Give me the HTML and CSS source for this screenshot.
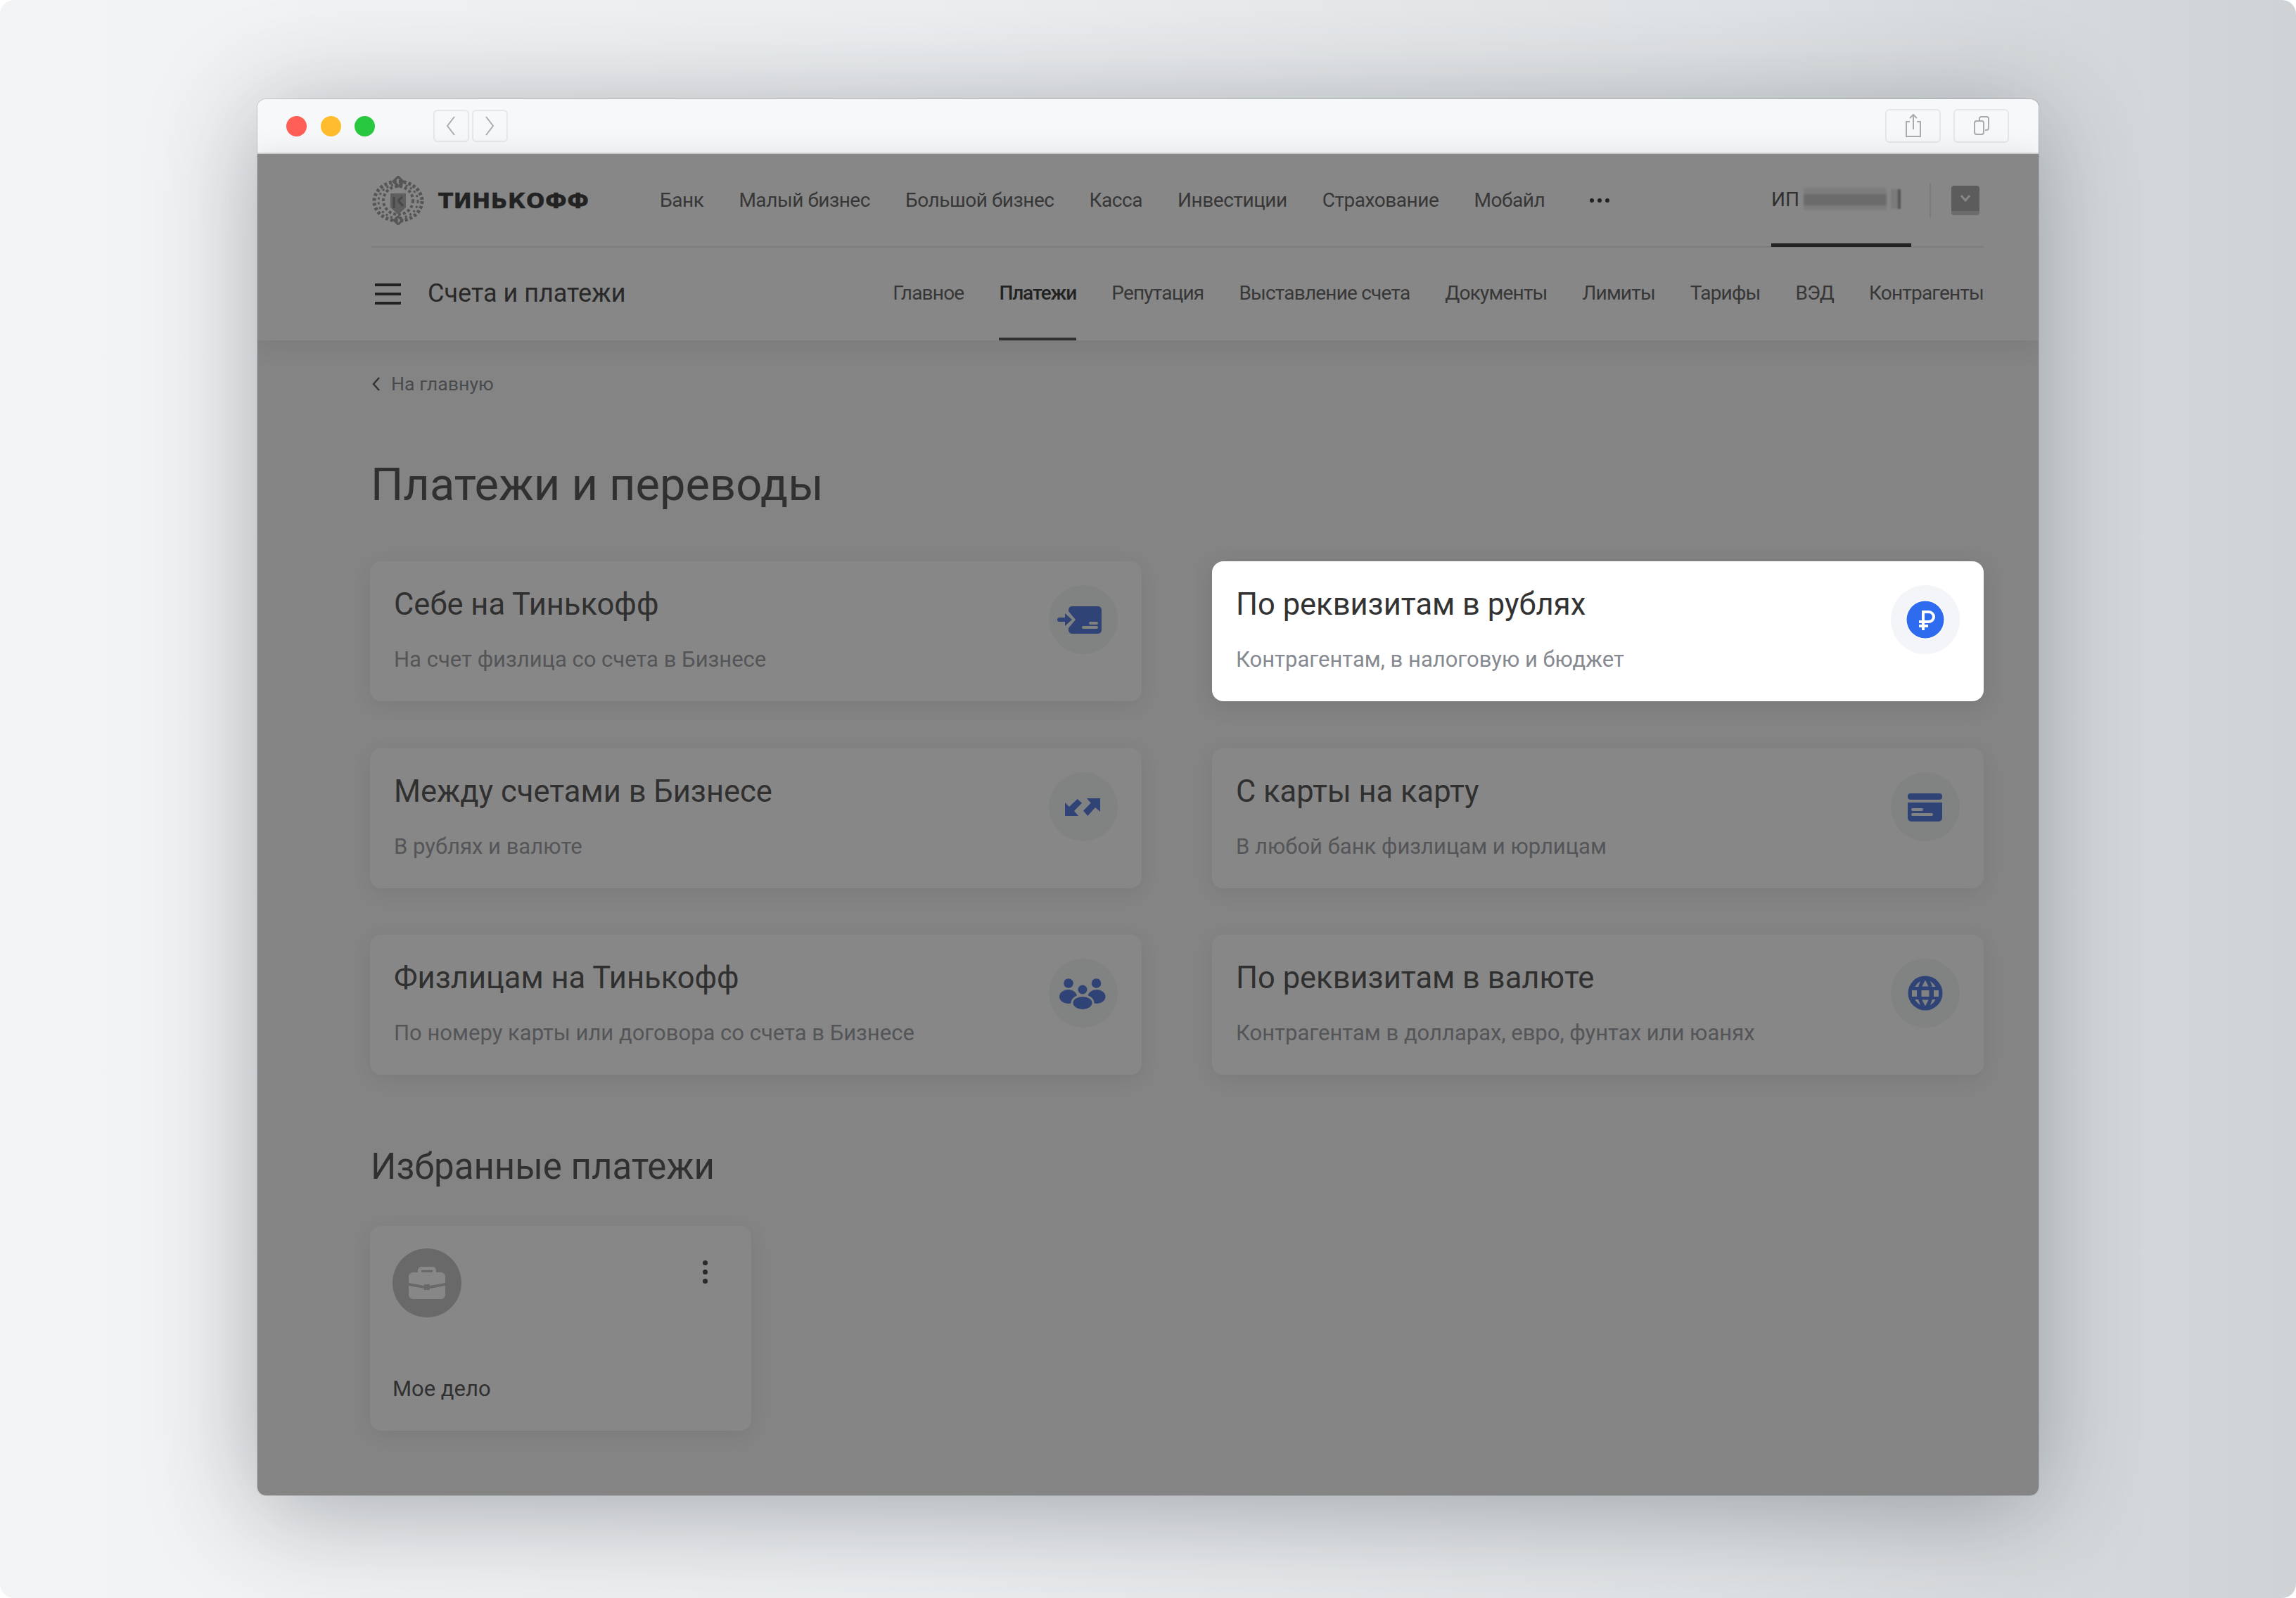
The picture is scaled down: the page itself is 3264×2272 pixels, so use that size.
FILE: index.html
```html
<!DOCTYPE html>
<html lang="ru">
  <head>
    <meta charset="utf-8" />
    <title>Платежи и переводы</title>
    <link rel="stylesheet" href="styles.css">
  </head>
  <body>
    <div class="stage">
      <div class="window">
        <div class="titlebar">
          <span class="light red"></span>
          <span class="light yellow"></span>
          <span class="light green"></span>
          <div class="arrows">
            <span class="tool-btn small">
              <svg width="20" height="30" viewBox="0 0 20 30"><path d="M15 2 5 15l10 13" class="thin"/></svg>
            </span>
            <span class="tool-btn small">
              <svg width="20" height="30" viewBox="0 0 20 30"><path d="M5 2l10 13L5 28" class="thin"/></svg>
            </span>
          </div>
          <div class="tools">
            <span class="tool-btn">
              <svg width="28" height="34" viewBox="0 0 28 34"><path d="M14 1v21M9 6l5-5 5 5M9 11H4v21h20V11h-5" class="thin"/></svg>
            </span>
            <span class="tool-btn">
              <svg width="28" height="34" viewBox="0 0 28 34"><path d="M11 9V7a3 3 0 0 1 3-3h7a3 3 0 0 1 3 3v13a3 3 0 0 1-3 3h-2M7 10h7a3 3 0 0 1 3 3v13a3 3 0 0 1-3 3H7a3 3 0 0 1-3-3V13a3 3 0 0 1 3-3z" class="thin"/></svg>
            </span>
          </div>
        </div>

        <div class="content">
          <header class="header">
            <div class="topbar">
              <div class="logo">
                <svg class="crest" width="76" height="70" viewBox="0 0 76 70">
                  <g fill="none" stroke="#8a8a8a">
                    <ellipse cx="38" cy="36" rx="34" ry="28" stroke-width="5" stroke-dasharray="4 3"/>
                    <ellipse cx="38" cy="36" rx="28" ry="24" stroke-width="3" stroke-dasharray="3 4"/>
                    <ellipse cx="38" cy="35" rx="21" ry="20" stroke-width="4" stroke-dasharray="4 3"/>
                    <path d="M38 1l7 7-7 7-7-7zM38 69l6-6-6-5-6 5z" stroke-width="3"/>
                  </g>
                  <path d="M27 25h22v20l-11 10-11-10z" fill="#a0a0a0"/>
                  <path d="M32 30v16M38 35l7 8M38 35l6-5" stroke="#6a6a6a" stroke-width="3" fill="none"/>
                </svg>
                <span class="wordmark">ТИНЬКОФФ</span>
              </div>
              <nav class="topnav">
                <a>Банк</a>
                <a>Малый бизнес</a>
                <a>Большой бизнес</a>
                <a>Касса</a>
                <a>Инвестиции</a>
                <a>Страхование</a>
                <a>Мобайл</a>
                <span class="more"><i></i><i></i><i></i></span>
              </nav>
              <div class="account">
                <div class="org">
                  <span class="org-name">ИП</span>
                  <span class="blur-name"></span>
                  <span class="blur-tail"></span>
                </div>
                <span class="account-sep"></span>
                <span class="account-btn">
                  <svg width="20" height="14" viewBox="0 0 20 14"><path d="M4 3l6 7 6-7" fill="none" stroke="#fff" stroke-width="3"/></svg>
                </span>
              </div>
            </div>
            <div class="subbar">
              <span class="burger"><i></i><i></i><i></i></span>
              <span class="section-name">Счета и платежи</span>
              <nav class="subnav">
                <a>Главное</a>
                <a class="active">Платежи</a>
                <a>Репутация</a>
                <a>Выставление счета</a>
                <a>Документы</a>
                <a>Лимиты</a>
                <a>Тарифы</a>
                <a>ВЭД</a>
                <a>Контрагенты</a>
              </nav>
            </div>
          </header>

          <main class="main">
            <a class="back">
              <svg width="14" height="22" viewBox="0 0 14 22"><path d="M11 2 3 11l8 9" fill="none" stroke="#3a3a3a" stroke-width="2.5"/></svg>
              На главную
            </a>
            <h1 class="page-title">Платежи и переводы</h1>

            <div class="cards">
              <div class="card">
                <div class="card-text">
                  <div class="card-title">Себе на Тинькофф</div>
                  <div class="card-sub">На счет физлица со счета в Бизнесе</div>
                </div>
                <svg class="card-icon" viewBox="0 0 98 98">
                  <circle cx="49" cy="49" r="49" class="disc"/>
                  <path d="M33 30h37a5 5 0 0 1 5 5v29a5 5 0 0 1-5 5H33a5 5 0 0 1-5-5v-3l10-12-10-12v-2a5 5 0 0 1 5-5z" class="blue"/>
                  <path d="M23 40l10 9-10 9v-6h-8a3 3 0 0 1 0-6h8z" class="blue"/>
                  <path d="M59 54h9M49 60h19" class="gap"/>
                </svg>
              </div>

              <div class="card selected">
                <div class="card-text">
                  <div class="card-title">По реквизитам в рублях</div>
                  <div class="card-sub">Контрагентам, в налоговую и бюджет</div>
                </div>
                <svg class="card-icon" viewBox="0 0 98 98">
                  <circle cx="49" cy="49" r="49" class="disc"/>
                  <circle cx="49" cy="49" r="28" fill="#fff"/>
                  <circle cx="49" cy="49" r="26.5" fill="#2f6bef"/>
                  <path d="M46 64V38h8a7 7 0 0 1 0 14H40M40 58h13" fill="none" stroke="#fff" stroke-width="4"/>
                </svg>
              </div>

              <div class="card">
                <div class="card-text">
                  <div class="card-title">Между счетами в Бизнесе</div>
                  <div class="card-sub">В рублях и валюте</div>
                </div>
                <svg class="card-icon" viewBox="0 0 98 98">
                  <circle cx="49" cy="49" r="49" class="disc"/>
                  <path d="M23 62V43l6 6 11.7-11L47 43.7 36 55l6 7z" class="blue"/>
                  <path d="M73 37H54l5.7 6.7L49 54.7l6.3 7.3L66 50l7 6z" class="blue"/>
                </svg>
              </div>

              <div class="card">
                <div class="card-text">
                  <div class="card-title">С карты на карту</div>
                  <div class="card-sub">В любой банк физлицам и юрлицам</div>
                </div>
                <svg class="card-icon" viewBox="0 0 98 98">
                  <circle cx="49" cy="49" r="49" class="disc"/>
                  <rect x="24" y="30" width="49" height="9" rx="4" class="blue"/>
                  <path d="M24 43h49v22a5 5 0 0 1-5 5H29a5 5 0 0 1-5-5z" class="blue"/>
                  <path d="M31 53h13M31 60h27" class="gap"/>
                </svg>
              </div>

              <div class="card">
                <div class="card-text">
                  <div class="card-title">Физлицам на Тинькофф</div>
                  <div class="card-sub">По номеру карты или договора со счета в Бизнесе</div>
                </div>
                <svg class="card-icon" viewBox="0 0 98 98">
                  <circle cx="49" cy="49" r="49" class="disc"/>
                  <circle cx="28" cy="35" r="6.8" class="blue"/>
                  <circle cx="67.5" cy="35" r="6.8" class="blue"/>
                  <circle cx="48" cy="44" r="6.5" class="blue"/>
                  <ellipse cx="27.5" cy="54" rx="12.5" ry="10" class="blue"/>
                  <ellipse cx="68" cy="54" rx="12.5" ry="10" class="blue"/>
                  <ellipse cx="48" cy="63" rx="15" ry="10.5" class="blue ringed"/>
                </svg>
              </div>

              <div class="card">
                <div class="card-text">
                  <div class="card-title">По реквизитам в валюте</div>
                  <div class="card-sub">Контрагентам в долларах, евро, фунтах или юанях</div>
                </div>
                <svg class="card-icon" viewBox="0 0 98 98">
                  <circle cx="49" cy="49" r="49" class="disc"/>
                  <circle cx="49" cy="49" r="24.5" class="blue"/>
                  <path d="M30 45h7v9h-7zM43.500 45h11v9h-11zM61 45h7v9h-7zM49 30.500l4.700 9h-9.400zM49 67.500l4.700-9h-9.400zM34.500 40c1.500-3 4-6 7.500-8l-3 8zM63.500 40c-1.500-3-4-6-7.500-8l3 8zM34.500 58c1.500 3 4 6 7.500 8l-3-8zM63.500 58c-1.500 3-4 6-7.500 8l3-8z" class="hole"/>
                </svg>
              </div>
            </div>

            <h2 class="fav-title">Избранные платежи</h2>
            <div class="fav-card">
              <div class="fav-top">
                <svg class="fav-icon" viewBox="0 0 98 98">
                  <circle cx="49" cy="49" r="49" fill="#b8b8b8"/>
                  <path d="M36 34v-3a5 5 0 0 1 5-5h16a5 5 0 0 1 5 5v3h7a6 6 0 0 1 6 6v9l-22 4v-2h-8v2l-22-4v-9a6 6 0 0 1 6-6zM41 34h16v-3H41z" fill="#fff" fill-rule="evenodd"/>
                  <path d="M23 53l22 4v2h8v-2l22-4v13a6 6 0 0 1-6 6H29a6 6 0 0 1-6-6z" fill="#fff"/>
                </svg>
                <span class="kebab"><i></i><i></i><i></i></span>
              </div>
              <div class="fav-name">Мое дело</div>
            </div>
          </main>

          <div class="dim"></div>
        </div>
      </div>
    </div>
  </body>
</html>
```

FILE: styles.css
```css
* {
  box-sizing: border-box;
}

body {
  margin: 0;
  background: #fff;
  font-family: Roboto, "Liberation Sans", sans-serif;
  color: #333;
}

.stage {
  width: 3264px;
  height: 2272px;
  padding: 141px 0 0 366px;
  border-radius: 20px;
  overflow: hidden;
  background: linear-gradient(90deg, #f3f4f5 0%, #eceef0 40%, #e0e3e5 75%, #cfd3d6 100%);
}

.window {
  width: 2532px;
  height: 1985px;
  border-radius: 12px;
  overflow: hidden;
  box-shadow: 0 0 0 1px rgba(0, 0, 0, 0.12), 0 20px 150px rgba(40, 50, 60, 0.38);
}

/* title bar */
.titlebar {
  height: 78px;
  display: flex;
  align-items: center;
  padding: 0 42px 0 41px;
  background: #f7f8f9;
  border-bottom: 2px solid #d4d5d6;
}

.light {
  width: 29px;
  height: 29px;
  border-radius: 50%;
  margin-right: 19.5px;
}

.red { background: #ff5f57; }
.yellow { background: #ffbd2e; }
.green { background: #28c940; }

.arrows {
  display: flex;
  gap: 4px;
  margin-left: 63px;
}

.tools {
  display: flex;
  gap: 18px;
  margin-left: auto;
}

.tool-btn {
  width: 79px;
  height: 48px;
  display: flex;
  align-items: center;
  justify-content: center;
  border: 2px solid #e6e7e9;
  border-radius: 6px;
}

.tool-btn.small {
  width: 51px;
  height: 46px;
}

.thin {
  fill: none;
  stroke: #a9abad;
  stroke-width: 2;
}

/* page */
.content {
  position: relative;
  height: 1907px;
  background: #f8f8f9;
}

.dim {
  position: absolute;
  inset: 0;
  z-index: 5;
  background: rgba(47, 47, 47, 0.577);
}

.header {
  background: #fff;
  height: 265px;
  padding: 0 78px 0 162px;
  box-shadow: 0 4px 40px rgba(0, 0, 0, 0.12);
  position: relative;
}

.topbar {
  height: 133px;
  display: flex;
  align-items: center;
  border-bottom: 2px solid #e4e5e7;
}

.logo {
  display: flex;
  align-items: center;
  gap: 19px;
  width: 410px;
}

.wordmark {
  font-family: "DejaVu Sans", sans-serif;
  font-weight: 700;
  font-size: 31px;
  letter-spacing: 0.6px;
  color: #111;
  -webkit-text-stroke: 0.5px #111;
}

.topnav,
.subnav {
  display: flex;
  gap: 50px;
  font-size: 28px;
  color: #444;
  white-space: nowrap;
}

.topnav {
  align-items: center;
  letter-spacing: -0.45px;
}

.subnav {
  letter-spacing: -0.8px;
}

.more {
  display: flex;
  gap: 5px;
  margin-left: 14px;
}

.more i {
  width: 6px;
  height: 6px;
  border-radius: 50%;
  background: #111;
}

.account {
  display: flex;
  align-items: center;
  margin-left: auto;
  height: 100%;
}

.org {
  width: 199px;
  height: 100%;
  display: flex;
  align-items: center;
  gap: 6px;
  border-bottom: 5px solid #111;
  margin-bottom: -2px;
  font-size: 28px;
}

.blur-name {
  width: 118px;
  height: 32px;
  background: linear-gradient(180deg, #e6e6e6 0 28%, #bdbdbd 28% 78%, #e8e8e8 78% 100%);
  filter: blur(1.5px);
}

.blur-tail {
  width: 14px;
  height: 28px;
  background: #e2e2e2;
  border-right: 4px solid #8a8a8a;
  filter: blur(1px);
}

.account-sep {
  width: 2px;
  height: 50px;
  margin: 0 29px 0 26px;
  background: #e4e5e7;
}

.account-btn {
  width: 40px;
  height: 42px;
  display: flex;
  align-items: center;
  justify-content: center;
  border-radius: 4px;
  background: #9a9a9a;
  border-bottom: 6px solid #c0c0c0;
  margin-right: 6px;
}

.subbar {
  height: 132px;
  display: flex;
  align-items: center;
}

.burger {
  display: flex;
  flex-direction: column;
  gap: 9px;
  margin-left: 5px;
}

.burger i {
  display: block;
  width: 37px;
  height: 4px;
  background: #111;
}

.section-name {
  margin: 0 0 2px 38px;
  font-size: 36px;
  color: #222;
}

.subnav {
  margin-left: auto;
  height: 100%;
  align-items: stretch;
}

.subnav a {
  display: flex;
  align-items: center;
  border-bottom: 4px solid transparent;
}

.subnav a.active {
  color: #111;
  font-weight: 500;
  letter-spacing: -1.1px;
  border-bottom-color: #333;
}

.main {
  padding: 46px 78px 0 160px;
}

.back {
  display: flex;
  align-items: center;
  gap: 14px;
  padding-left: 2px;
  font-size: 26.7px;
  color: #6c7178;
}

.page-title {
  margin: 87px 0 0;
  padding-left: 1px;
  font-size: 65px;
  font-weight: 400;
  line-height: 80px;
  color: #333;
}

.cards {
  display: grid;
  grid-template-columns: 1fr 1fr;
  column-gap: 100px;
  row-gap: 66.5px;
  margin-top: 69px;
}

.card {
  height: 199px;
  display: flex;
  justify-content: space-between;
  padding: 34px 34px 0 34px;
  border-radius: 16px;
  background: #fff;
  box-shadow: 0 6px 30px rgba(0, 0, 0, 0.1);
}

.card.selected {
  position: relative;
  z-index: 10;
}

.card-text {
  padding-top: 2px;
}

.card-title {
  font-size: 43.5px;
  line-height: 52px;
  color: #333;
}

.card-sub {
  margin-top: 32px;
  font-size: 31px;
  line-height: 40px;
  color: #868a90;
}

.card-icon {
  width: 98px;
  height: 98px;
}

.disc,
.hole { fill: #f1f2f3; }
.blue { fill: #2f5fd8; }
.ringed { stroke: #f1f2f3; stroke-width: 3; }
.gap { fill: none; stroke: #f1f2f3; stroke-width: 4; stroke-linecap: round; }
.selected .disc { fill: #f4f5f8; }

.fav-title {
  margin: 96px 0 0;
  padding-left: 1px;
  font-size: 51px;
  font-weight: 400;
  line-height: 70px;
  color: #333;
}

.fav-card {
  width: 542px;
  height: 291px;
  margin-top: 49px;
  padding: 32px 32px 0 32px;
  border-radius: 16px;
  background: #fff;
  box-shadow: 0 6px 30px rgba(0, 0, 0, 0.1);
}

.fav-top {
  display: flex;
  justify-content: space-between;
}

.fav-icon {
  width: 98px;
  height: 98px;
}

.kebab {
  display: flex;
  flex-direction: column;
  gap: 6px;
  margin: 17px 30px 0 0;
}

.kebab i {
  display: block;
  width: 7px;
  height: 7px;
  border-radius: 50%;
  background: #222;
}

.fav-name {
  margin-top: 82px;
  font-size: 31px;
  line-height: 40px;
  color: #333;
}
```
